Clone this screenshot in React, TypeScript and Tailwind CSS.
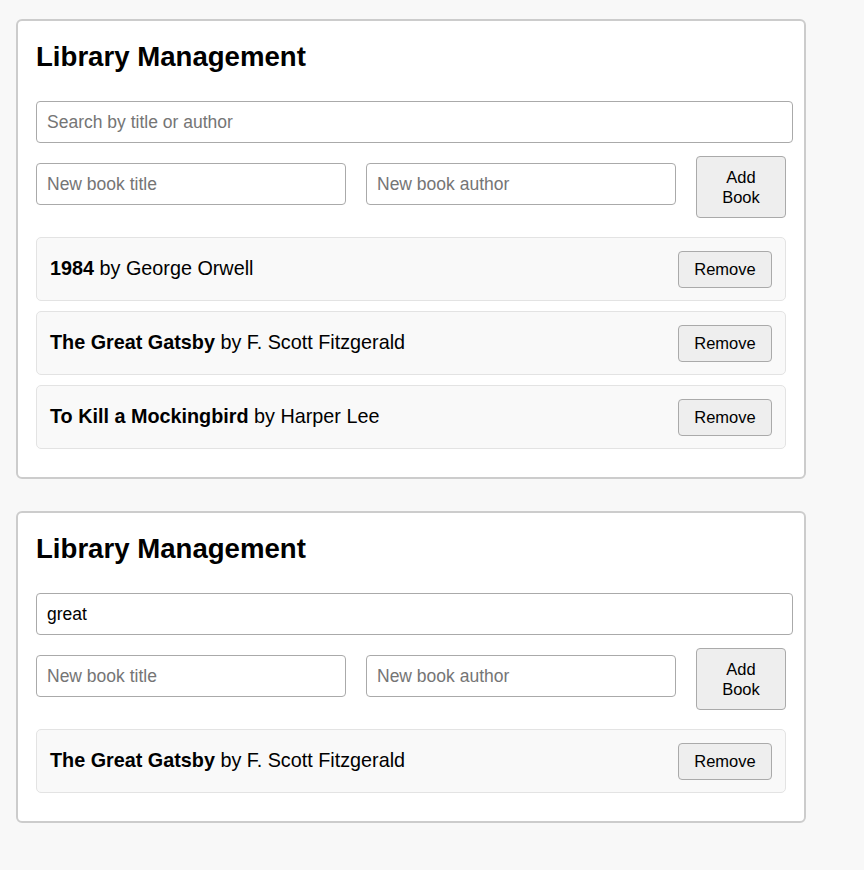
import React, { useState } from "react";

type Book = { title: string; author: string };

const ALL: Book[] = [
  { title: "1984", author: "George Orwell" },
  { title: "The Great Gatsby", author: "F. Scott Fitzgerald" },
  { title: "To Kill a Mockingbird", author: "Harper Lee" },
];

function Library({ initialQuery }: { initialQuery: string }) {
  const [query, setQuery] = useState(initialQuery);
  const q = query.trim().toLowerCase();
  const books = ALL.filter(
    (b) => !q || b.title.toLowerCase().includes(q) || b.author.toLowerCase().includes(q)
  );
  return (
    <div className="w-[790px] rounded-[6px] border-2 border-[#cccccc] bg-white px-[18px] pt-[18px] pb-[18px]">
      <h2 className="m-0 mt-[1.5px] text-[27.6px] font-bold leading-[31.7px] text-black">Library Management</h2>
      <input
        className="mt-[28.8px] box-border block h-[42px] w-[757px] rounded-[4px] border border-[#aaaaaa] bg-white px-[10px] text-[17.5px] text-black outline-none placeholder:text-[#757575]"
        placeholder="Search by title or author"
        value={query}
        onChange={(e) => setQuery(e.target.value)}
      />
      <div className="mt-[13px] flex items-start gap-[20px]">
        <input
          className="mt-[7px] box-border block h-[42px] min-w-0 flex-1 rounded-[4px] border border-[#aaaaaa] bg-white px-[10px] text-[17.5px] text-black outline-none placeholder:text-[#757575]"
          placeholder="New book title"
        />
        <input
          className="mt-[7px] box-border block h-[42px] min-w-0 flex-1 rounded-[4px] border border-[#aaaaaa] bg-white px-[10px] text-[17.5px] text-black outline-none placeholder:text-[#757575]"
          placeholder="New book author"
        />
        <button className="box-border flex h-[62px] w-[90px] shrink-0 flex-col items-center justify-center rounded-[4px] border border-[#aaaaaa] bg-[#eeeeee] text-[16.5px] leading-[20px] text-black">
          <span>Add</span>
          <span>Book</span>
        </button>
      </div>
      <div className="mt-[19px] flex flex-col">
        {books.map((b) => (
          <div
            key={b.title}
            className="mb-[10px] box-border flex h-[64px] items-center justify-between rounded-[5px] border border-[#e3e3e3] bg-[#f9f9f9] pl-[13px] pr-[13px]"
          >
            <span className="text-[19.8px] text-black">
              <strong className="font-bold">{b.title}</strong> by {b.author}
            </span>
            <button className="box-border h-[37px] w-[94px] rounded-[4px] border border-[#aaaaaa] bg-[#eeeeee] text-[16.5px] text-black">
              Remove
            </button>
          </div>
        ))}
      </div>
    </div>
  );
}

export default function App() {
  return (
    <div
      className="min-h-[870px] bg-[#f8f8f8] pl-[16px] pt-[19px]"
      style={{ fontFamily: '"Liberation Sans", Arial, sans-serif' }}
    >
      <div className="flex flex-col gap-[32px]">
        <Library initialQuery="" />
        <Library initialQuery="great" />
      </div>
    </div>
  );
}
